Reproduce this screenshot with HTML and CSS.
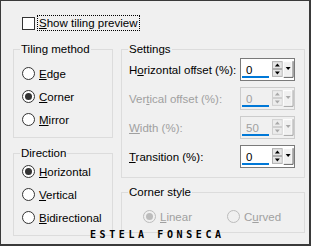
FILE: index.html
```html
<!DOCTYPE html>
<html lang="en">
<head>
    <meta charset="UTF-8">
    <title>Tiling</title>
    <link rel="stylesheet" href="styles.css">
</head>
<body>

    <div class="dialog">
        <div class="preview-row">
            <span class="checkbox"></span>
            <span class="focus-label"><u>S</u>how tiling preview</span>
        </div>

        <div class="columns">
            <div class="col-left">
                <fieldset class="group">
                    <legend>Tiling method</legend>
                    <div class="tiling">
                        <div class="radio-row"><span class="radio"></span><span><u>E</u>dge</span></div>
                        <div class="radio-row"><span class="radio checked"></span><span><u>C</u>orner</span></div>
                        <div class="radio-row"><span class="radio"></span><span><u>M</u>irror</span></div>
                    </div>
                </fieldset>
                <fieldset class="group">
                    <legend>Direction</legend>
                    <div class="direction">
                        <div class="radio-row"><span class="radio checked"></span><span><u>H</u>orizontal</span></div>
                        <div class="radio-row"><span class="radio"></span><span><u>V</u>ertical</span></div>
                        <div class="radio-row"><span class="radio"></span><span><u>B</u>idirectional</span></div>
                    </div>
                </fieldset>
            </div>

            <div class="col-right">
                <fieldset class="group">
                    <legend>Settings</legend>
                    <div class="settings">
                        <div class="field-row">
                            <span>H<u>o</u>rizontal offset (%):</span>
                            <div class="spin">
                                <span class="spin-value">0</span>
                                <svg class="spin-btns" width="22" height="17" viewBox="0 0 22 17">
                                    <rect x="0.5" y="0.5" width="10" height="7" fill="#e6e6e6" stroke="#adadad"/>
                                    <polygon points="3,5.5 5.5,2.5 8,5.5" fill="#000"/>
                                    <rect x="0.5" y="8.5" width="10" height="7" fill="#e6e6e6" stroke="#adadad"/>
                                    <polygon points="3,10.5 5.5,13.5 8,10.5" fill="#000"/>
                                    <rect x="11.5" y="0.5" width="9" height="15" fill="#f0f0f0" stroke="#fff"/>
                                    <polyline points="12,16.5 21.5,16.5 21.5,0" fill="none" stroke="#555"/>
                                    <polygon points="14,6 19,6 16.5,9" fill="#000"/>
                                </svg>
                            </div>
                        </div>
                        <div class="field-row disabled">
                            <span>Ver<u>t</u>ical offset (%):</span>
                            <div class="spin">
                                <span class="spin-value">0</span>
                                <svg class="spin-btns" width="22" height="17" viewBox="0 0 22 17">
                                    <rect x="0.5" y="0.5" width="10" height="7" fill="#ececec" stroke="#cfcfcf"/>
                                    <polygon points="3,5.5 5.5,2.5 8,5.5" fill="#a8a8a8"/>
                                    <rect x="0.5" y="8.5" width="10" height="7" fill="#ececec" stroke="#cfcfcf"/>
                                    <polygon points="3,10.5 5.5,13.5 8,10.5" fill="#a8a8a8"/>
                                    <rect x="11.5" y="0.5" width="9" height="15" fill="#f0f0f0" stroke="#fff"/>
                                    <polyline points="12,16.5 21.5,16.5 21.5,0" fill="none" stroke="#a0a0a0"/>
                                    <polygon points="14,6 19,6 16.5,9" fill="#a8a8a8"/>
                                </svg>
                            </div>
                        </div>
                        <div class="field-row disabled">
                            <span><u>W</u>idth (%):</span>
                            <div class="spin">
                                <span class="spin-value">50</span>
                                <svg class="spin-btns" width="22" height="17" viewBox="0 0 22 17">
                                    <rect x="0.5" y="0.5" width="10" height="7" fill="#ececec" stroke="#cfcfcf"/>
                                    <polygon points="3,5.5 5.5,2.5 8,5.5" fill="#a8a8a8"/>
                                    <rect x="0.5" y="8.5" width="10" height="7" fill="#ececec" stroke="#cfcfcf"/>
                                    <polygon points="3,10.5 5.5,13.5 8,10.5" fill="#a8a8a8"/>
                                    <rect x="11.5" y="0.5" width="9" height="15" fill="#f0f0f0" stroke="#fff"/>
                                    <polyline points="12,16.5 21.5,16.5 21.5,0" fill="none" stroke="#a0a0a0"/>
                                    <polygon points="14,6 19,6 16.5,9" fill="#a8a8a8"/>
                                </svg>
                            </div>
                        </div>
                        <div class="field-row">
                            <span><u>T</u>ransition (%):</span>
                            <div class="spin">
                                <span class="spin-value">0</span>
                                <svg class="spin-btns" width="22" height="17" viewBox="0 0 22 17">
                                    <rect x="0.5" y="0.5" width="10" height="7" fill="#e6e6e6" stroke="#adadad"/>
                                    <polygon points="3,5.5 5.5,2.5 8,5.5" fill="#000"/>
                                    <rect x="0.5" y="8.5" width="10" height="7" fill="#e6e6e6" stroke="#adadad"/>
                                    <polygon points="3,10.5 5.5,13.5 8,10.5" fill="#000"/>
                                    <rect x="11.5" y="0.5" width="9" height="15" fill="#f0f0f0" stroke="#fff"/>
                                    <polyline points="12,16.5 21.5,16.5 21.5,0" fill="none" stroke="#555"/>
                                    <polygon points="14,6 19,6 16.5,9" fill="#000"/>
                                </svg>
                            </div>
                        </div>
                    </div>
                </fieldset>
                <fieldset class="group">
                    <legend>Corner style</legend>
                    <div class="corner-row disabled">
                        <div class="radio-row"><span class="radio checked"></span><span><u>L</u>inear</span></div>
                        <div class="radio-row"><span class="radio"></span><span>C<u>u</u>rved</span></div>
                    </div>
                </fieldset>
            </div>
        </div>

        <div class="watermark">ESTELA FONSECA</div>
    </div>

</body>
</html>
```

FILE: styles.css
```css
/* Tile dialog, classic Windows look */
html, body {
    margin: 0;
    padding: 0;
}

body {
    font-family: "Liberation Sans", Arial, sans-serif;
    font-size: 11.5px;
    color: #000;
    background-color: #f0f0f0;
}

.dialog {
    position: relative;
    width: 311px;
    height: 246px;
    box-sizing: border-box;
    border-left: 1px solid #3a3a3a;
    border-top: 1px solid #3a3a3a;
    border-right: 2px solid #3a3a3a;
    border-bottom: 2px solid #3a3a3a;
    background-color: #f0f0f0;
    padding-top: 14px;
}

.preview-row {
    display: flex;
    align-items: center;
    height: 16px;
    padding-left: 21px;
}

.checkbox {
    width: 11px;
    height: 11px;
    border: 1px solid #333;
    background-color: #fff;
    margin-right: 2px;
}

.focus-label {
    border: 1px dotted #000;
    padding: 0 2px 0 1px;
    line-height: 14px;
}

.columns {
    display: flex;
    gap: 8px;
    padding-left: 12px;
    margin-top: 11px;
}

.col-left {
    width: 100px;
    display: flex;
    flex-direction: column;
    gap: 8px;
}

.col-right {
    width: 184px;
    display: flex;
    flex-direction: column;
    gap: 7px;
}

.group {
    margin: 0;
    padding: 0;
    min-width: 0;
    border: 1px solid #dcdcdc;
    border-radius: 0;
}

.group legend {
    padding: 0 1px;
    margin-left: 6px;
    line-height: 14px;
}

.tiling {
    padding: 6px 0 6px 8px;
}

.direction {
    padding: 0 0 6px 8px;
}

.radio-row {
    display: flex;
    align-items: center;
    gap: 4px;
    height: 23px;
    white-space: nowrap;
}

.radio {
    position: relative;
    width: 11px;
    height: 11px;
    border: 1px solid #333;
    border-radius: 50%;
    background-color: #fff;
    flex-shrink: 0;
}

.radio.checked::after {
    content: "";
    position: absolute;
    left: 2px;
    top: 2px;
    width: 7px;
    height: 7px;
    border-radius: 50%;
    background-color: #333;
}

.settings {
    padding: 2px 9px 9px 7px;
    display: flex;
    flex-direction: column;
    gap: 6px;
}

.field-row {
    display: flex;
    align-items: center;
    justify-content: space-between;
    height: 23px;
    white-space: nowrap;
}

.spin {
    position: relative;
    width: 55px;
    height: 23px;
    box-sizing: border-box;
    border: 1px solid #7a7a7a;
    background-color: #fff;
    display: flex;
    align-items: center;
    flex-shrink: 0;
}

.spin-value {
    padding-left: 5px;
    width: 26px;
}

.spin::after {
    content: "";
    position: absolute;
    left: 1px;
    bottom: 2px;
    width: 27px;
    height: 2px;
    background-color: #0078d7;
}

.spin-btns {
    margin-left: 1px;
}

.disabled {
    color: #a0a0a0;
}

.disabled .spin {
    border-color: #cccccc;
    background-color: #f0f0f0;
}

.corner-row {
    display: grid;
    grid-template-columns: 84px auto;
    padding: 6px 0 4px 21px;
}

.corner-row .radio {
    border-color: #bcbcbc;
    background-color: #f0f0f0;
}

.corner-row .radio.checked::after {
    background-color: #bcbcbc;
}

.watermark {
    position: absolute;
    left: 89px;
    top: 229px;
    font-family: "DejaVu Sans Mono", monospace;
    font-weight: bold;
    font-size: 10px;
    letter-spacing: 3.6px;
    line-height: 10px;
    color: #000;
}
```
